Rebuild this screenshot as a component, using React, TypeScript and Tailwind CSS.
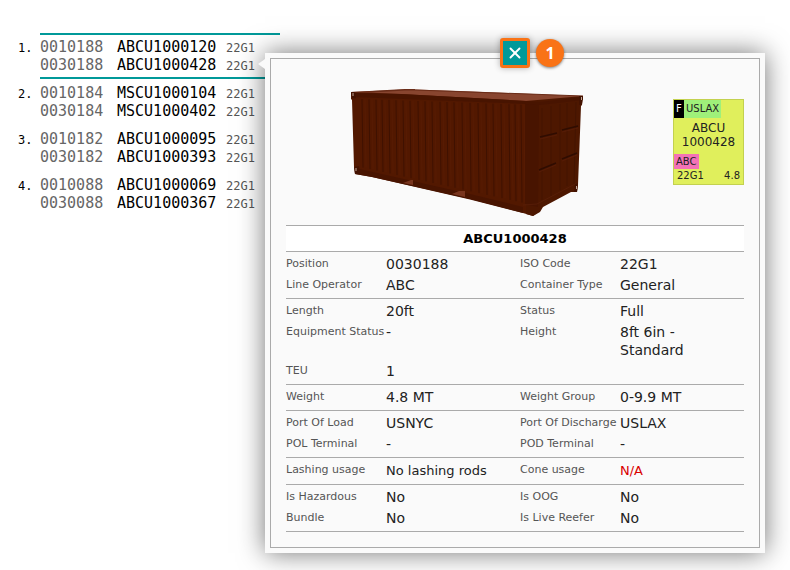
import { X } from "lucide-react";

interface Slot {
  position: string;
  container: string;
  iso: string;
}

interface Field {
  label: string;
  value: string;
  tone?: "small" | "alert";
}

const lifts: Slot[][] = [
  [
    { position: "0010188", container: "ABCU1000120", iso: "22G1" },
    { position: "0030188", container: "ABCU1000428", iso: "22G1" },
  ],
  [
    { position: "0010184", container: "MSCU1000104", iso: "22G1" },
    { position: "0030184", container: "MSCU1000402", iso: "22G1" },
  ],
  [
    { position: "0010182", container: "ABCU1000095", iso: "22G1" },
    { position: "0030182", container: "ABCU1000393", iso: "22G1" },
  ],
  [
    { position: "0010088", container: "ABCU1000069", iso: "22G1" },
    { position: "0030088", container: "ABCU1000367", iso: "22G1" },
  ],
];

const sections: Field[][] = [
  [
    { label: "Position", value: "0030188" },
    { label: "ISO Code", value: "22G1" },
    { label: "Line Operator", value: "ABC" },
    { label: "Container Type", value: "General" },
  ],
  [
    { label: "Length", value: "20ft" },
    { label: "Status", value: "Full" },
    { label: "Equipment Status", value: "-" },
    { label: "Height", value: "8ft 6in - Standard" },
    { label: "TEU", value: "1" },
  ],
  [
    { label: "Weight", value: "4.8 MT" },
    { label: "Weight Group", value: "0-9.9 MT" },
  ],
  [
    { label: "Port Of Load", value: "USNYC" },
    { label: "Port Of Discharge", value: "USLAX" },
    { label: "POL Terminal", value: "-" },
    { label: "POD Terminal", value: "-" },
  ],
  [
    { label: "Lashing usage", value: "No lashing rods", tone: "small" },
    { label: "Cone usage", value: "N/A", tone: "alert" },
  ],
  [
    { label: "Is Hazardous", value: "No" },
    { label: "Is OOG", value: "No" },
    { label: "Bundle", value: "No" },
    { label: "Is Live Reefer", value: "No" },
  ],
];

const valueStyles = {
  normal: "pr-[10px] text-[14px] text-[#222]",
  small: "pt-px text-[13px] text-[#222]",
  alert: "pt-px text-[13px] text-[#d90000]",
};

// x of each corrugation groove on the long side
const grooves = [30, 37, 44, 50, 57, 64, 71, 78, 86, 93, 100, 108, 115, 122, 130, 138, 146, 154, 161, 169, 177, 183, 189];

function ContainerDrawing() {
  return (
    <svg viewBox="0 -1 270 151" className="h-[151px] w-[270px]" role="img" aria-label="20ft container">
      <path d="M19 17L73 14.500h10L128 16l123 5v2l-56 4L19 19z" fill="#88452f" />
      <path d="M19 17L73 14v1.500L40 17.500zM73 14h10v1.500H73zM83 14.500L251 20.500v1L83 15.500z" fill="#6a2c18" />
      <path d="M19 17l50 2 125 7 14 2v108l-7 5-10-3-53-14L40 102l-17-3-1-7-2-67-1-1z" fill="#521800" />
      <path d="M194 26l57-5-1 9-1 1-3 79-1 7-6 0-28 15-3 5-7 4-7-2z" fill="#4d1700" />
      <path d="M19 18l50 1 125 7v3L22 22zM23 93l115 26 53 13v6l-53-13.500L40 102l-17-3z" fill="#481400" />
      <path d="M19 17l4 .2 1 6h-4zM22 92l5-1 1 8h-5z" fill="#431200" />
      {grooves.map((x) => (
        <path
          key={x}
          d={`M${x} ${23 + x * 0.035}L${x + 1} ${86 + x * 0.22}`}
          stroke="#3f1100"
          strokeWidth="1"
        />
      ))}
      {grooves.map((x) => (
        <path key={x} d={`M${x + 3} ${23 + x * 0.035}L${x + 4} ${86 + x * 0.22}`} stroke="#5c1e06" strokeWidth="0.5" />
      ))}
      <path d="M71 108l8-3h2v5zM120 119l7-3h6v6z" fill="#78351e" />
      <path d="M193 28l14 2-1 102-13-3z" fill="#481400" />
      <path d="M194 26l14 1 43-5v3l-43 5-14-1z" fill="#481400" />
      <path d="M210 33v92M219 31v90M228 29v86M235 28v83M244 27l-2 83" fill="none" stroke="#3f1200" strokeWidth="0.7" />
      <path d="M208 62l17-4M230 55l16-4M207 95l17-7M230 84l15-6" fill="none" stroke="#2f0c00" strokeWidth="1.5" />
      <path d="M208 64l17-4M230 57l16-4M207 97l17-7M230 86l15-6" fill="none" stroke="#5c200b" strokeWidth="0.6" />
      <path d="M191 130l14-1 40-21" fill="none" stroke="#5e210b" strokeWidth="0.6" />
      <path d="M247 21h4l-1 8-3 1zM243 109l3-1-1 9h-3z" fill="#431200" />
      <path d="M21 18v3M24 93v3M249.500 22v3M244.500 111v3" stroke="#d0b9aa" strokeWidth="0.9" />
    </svg>
  );
}

function ContainerTile() {
  return (
    <div className="mt-[25px] flex h-[86px] w-[71px] flex-col border border-[#c3d14f] bg-[#e0ef5c] pb-px text-[10px] leading-[18px] text-[#222]">
      <div className="flex">
        <span className="w-[10px] bg-black text-center text-white">F</span>
        <span className="bg-[#9ff07a] px-[2px]">USLAX</span>
      </div>
      <div className="mt-[3px] text-center text-[12px] leading-[14px]">
        ABCU
        <br />
        1000428
      </div>
      <div className="mt-auto flex leading-[15px]">
        <span className="bg-[#f472b6] px-[2px]">ABC</span>
      </div>
      <div className="flex justify-between px-[3px] leading-[14px]">
        <span>22G1</span>
        <span>4.8</span>
      </div>
    </div>
  );
}

function ContainerDetails() {
  return (
    <div className="absolute top-[53px] right-[25px] left-[265px] bg-[#fafafa] p-[5px] font-['DejaVu_Sans',sans-serif] shadow-[0_0_25px_rgba(0,0,0,0.55)]">
      <div className="absolute top-[6px] -left-[7px] h-[10px] w-[7px] bg-[#fafafa] [clip-path:polygon(100%_0,0_50%,100%_100%)]" />
      <button
        type="button"
        aria-label="Close"
        className="absolute -top-[15px] left-[235px] flex size-[30px] items-center justify-center rounded-[3px] border-3 border-[#f97316] bg-[#009999] text-white shadow-[0_0_6px_rgba(0,0,0,0.3)]"
      >
        <X size={18} strokeWidth={2.5} />
      </button>
      <span className="absolute -top-[14px] left-[271px] flex size-7 items-center justify-center rounded-full bg-[#f97316] font-['Open_Sans',sans-serif] text-[16px] font-bold text-white shadow-[0_1px_3px_rgba(0,0,0,0.5)]">
        1
      </span>
      <div className="border border-[#aaa] p-[15px]">
        <div className="flex h-[151px]">
          <div className="mr-[25px] flex flex-1 justify-center">
            <ContainerDrawing />
          </div>
          <ContainerTile />
        </div>
        <h2 className="border-y border-[#aaa] bg-white text-center text-[13px] leading-[25px] font-bold text-black">
          ABCU1000428
        </h2>
        {sections.map((fields) => (
          <dl key={fields[0].label} className="grid grid-cols-2 gap-x-[10px] border-b border-[#aaa] pt-[3px] pb-px">
            {fields.map((field) => (
              <div key={field.label} className="flex pb-[3px] leading-[18px]">
                <dt className="w-[100px] shrink-0 text-[11px] whitespace-nowrap text-[#555]">{field.label}</dt>
                <dd className={valueStyles[field.tone ?? "normal"]}>{field.value}</dd>
              </div>
            ))}
          </dl>
        ))}
      </div>
    </div>
  );
}

export default function App() {
  return (
    <main className="relative min-h-screen bg-white pt-[33px] pl-[15px] font-['DejaVu_Sans_Mono',monospace]">
      <ol className="w-[265px]">
        {lifts.map((slots, index) => (
          <li key={slots[0].position} className="flex items-start">
            <span className="w-[25px] pt-[6px] pl-[3px] text-[12px] leading-[18px] text-black">{index + 1}.</span>
            <div className={index === 0 ? "flex-1 border-y-2 border-[#009999] py-[3px]" : "flex-1 py-[5px]"}>
              {slots.map((slot) => (
                <div key={slot.position} className="flex h-[18px] items-baseline text-[15px] leading-[18px]">
                  <span className="w-[77px] text-[#666]">{slot.position}</span>
                  <span className="w-[109px] text-black">{slot.container}</span>
                  <span className="text-[12px] text-[#555]">{slot.iso}</span>
                </div>
              ))}
            </div>
          </li>
        ))}
      </ol>
      <ContainerDetails />
    </main>
  );
}
